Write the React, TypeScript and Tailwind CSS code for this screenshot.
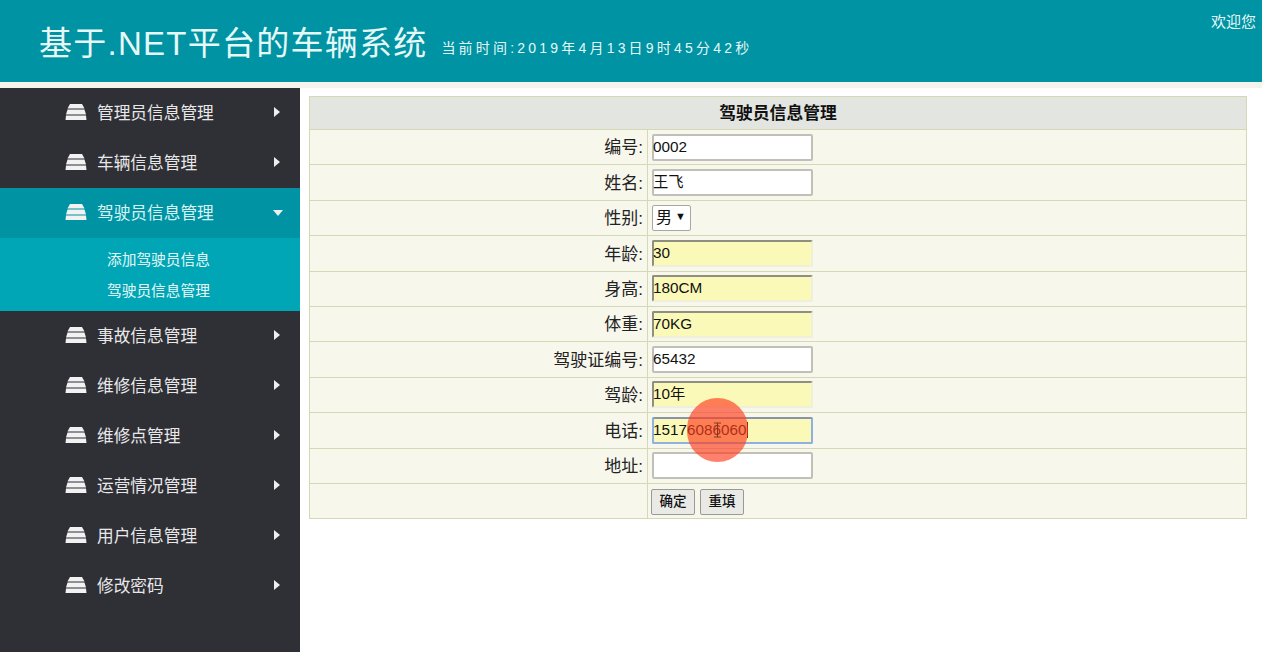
const FONT = '"Liberation Sans","Noto Sans CJK SC",sans-serif';

function Stack() {
  return (
    <svg width="22" height="16" viewBox="0 0 22 16" className="shrink-0 mb-[2px]">
      <path d="M5 0H17L19.5 4.500H2.500Z" fill="#f2f2f2" />
      <path d="M2.500 5.500H19.500L21 10.500H1Z" fill="#f2f2f2" />
      <path d="M1 11.500H21L21.500 16H0.500Z" fill="#f2f2f2" />
    </svg>
  );
}

function Item({ label, open }: { label: string; open?: boolean }) {
  return (
    <div className={`h-[50px] flex items-center pl-[65px] ${open ? "bg-[#0093a3] text-[#d8f3f5]" : "text-[#e8e8e8]"}`}>
      <Stack />
      <span className="ml-[10px] pt-[2px] text-[16.7px] flex-1 whitespace-nowrap">{label}</span>
      {open ? (
        <svg width="10" height="6" viewBox="0 0 10 6" className="mr-[17px] mb-[1px]"><path d="M0 0H10L5 6Z" fill="#eeeeee" /></svg>
      ) : (
        <svg width="6" height="10" viewBox="0 0 6 10" className="mr-[20px] mb-[2px]"><path d="M0 0L6 5L0 10Z" fill="#eeeeee" /></svg>
      )}
    </div>
  );
}

type Row = { label: string; value?: string; yellow?: boolean; focus?: boolean };
const rows: Row[] = [
  { label: "编号:", value: "0002" },
  { label: "姓名:", value: "王飞" },
  { label: "性别:" },
  { label: "年龄:", value: "30", yellow: true },
  { label: "身高:", value: "180CM", yellow: true },
  { label: "体重:", value: "70KG", yellow: true },
  { label: "驾驶证编号:", value: "65432" },
  { label: "驾龄:", value: "10年", yellow: true },
  { label: "电话:", value: "15176086060", yellow: true, focus: true },
  { label: "地址:", value: "" },
];

function Field({ r }: { r: Row }) {
  const cls = r.focus
    ? "bg-[#fbf9b8] border-2 border-[#8fb0e0] border-t-[#8a93a8]"
    : r.yellow
      ? "bg-[#fbf9b8] border-2 border-[#efefdc] border-t-[#8f8f80] border-l-[#8f8f80]"
      : "bg-white border-2 border-[#c0c0b8]";
  return (
    <div className={`w-[161px] h-[27px] rounded-[2px] flex items-center text-[15.3px] text-[#111] ${cls}`}>
      <span className="-ml-[1px] whitespace-nowrap">{r.value}</span>
      {r.focus && <span className="w-[1.5px] h-[16px] bg-[#7a1a10]" />}
    </div>
  );
}

function Btn({ label }: { label: string }) {
  return (
    <button className="h-[26px] w-[44px] border border-[#9a9a94] rounded-[2px] bg-[#e9e9e6] text-[13.5px] text-[#111] font-medium">
      {label}
    </button>
  );
}

export default function App() {
  return (
    <div className="relative w-[1262px] h-[652px] overflow-hidden bg-white" style={{ fontFamily: FONT }}>
      <div className="h-[82px] bg-[#0093a3] relative flex items-start pl-[39px] text-[#e6f8f8]">
        <span className="text-[33px] leading-[40px] mt-[24px] tracking-[1.25px] whitespace-nowrap">基于.NET平台的车辆系统</span>
        <span className="text-[14px] leading-[20px] mt-[38px] ml-[14px] tracking-[3.2px] whitespace-nowrap">当前时间:2019年4月13日9时45分42秒</span>
        <span className="absolute right-[6px] top-[12px] text-[15px] leading-[20px]">欢迎您</span>
      </div>
      <div className="h-[6px] bg-[#f5f4ec]" />
      <div className="flex h-[564px]">
        <div className="w-[300px] bg-[#2f2f36] shrink-0">
          <Item label="管理员信息管理" />
          <Item label="车辆信息管理" />
          <Item label="驾驶员信息管理" open />
          <div className="h-[73px] bg-[#00a6b5] pl-[107px] pt-[7px] text-[14.7px] text-[#e6f8f8]">
            <div className="h-[31px] leading-[31px]">添加驾驶员信息</div>
            <div className="h-[31px] leading-[31px]">驾驶员信息管理</div>
          </div>
          <Item label="事故信息管理" />
          <Item label="维修信息管理" />
          <Item label="维修点管理" />
          <Item label="运营情况管理" />
          <Item label="用户信息管理" />
          <Item label="修改密码" />
        </div>
        <div className="flex-1 pl-[9px] pt-[8px]">
          <div className="w-[938px] border border-[#d5d8b4] bg-[#f7f7ec]">
            <div className="h-[33px] pt-[1px] bg-[#e3e5e0] flex items-center justify-center text-[16.8px] font-bold text-[#111] border-b border-[#d5d8b4]">
              驾驶员信息管理
            </div>
            {rows.map((r) => (
              <div key={r.label} className="h-[35.4px] flex border-b border-[#d5d8b4] text-[17px] text-[#222]">
                <div className="w-[338px] pt-[2px] border-r border-[#d5d8b4] flex items-center justify-end pr-[4px]">{r.label}</div>
                <div className="flex-1 flex items-center pl-[4px]">
                  {r.value === undefined ? (
                    <div className="w-[39px] h-[26px] bg-white border border-[#a8a8a0] rounded-[2px] flex items-center pl-[3px] text-[16px] text-[#111] gap-[3px]">
                      男<span className="text-[11px] mb-[3px]">▼</span>
                    </div>
                  ) : (
                    <Field r={r} />
                  )}
                </div>
              </div>
            ))}
            <div className="h-[34px] flex">
              <div className="w-[338px] border-r border-[#d5d8b4]" />
              <div className="flex items-center pl-[3px] pt-[2px] gap-[5px]">
                <Btn label="确定" />
                <Btn label="重填" />
              </div>
            </div>
          </div>
        </div>
      </div>
      <div className="absolute left-[687px] top-[398px] w-[61px] h-[64px] rounded-full bg-[#ff3c1e]/65 flex items-center justify-center">
        <svg width="9" height="16" viewBox="0 0 9 16"><path d="M1 1H8M4.500 1V15M1 15H8" stroke="#7a3a20" strokeWidth="1" fill="none" /></svg>
      </div>
    </div>
  );
}
